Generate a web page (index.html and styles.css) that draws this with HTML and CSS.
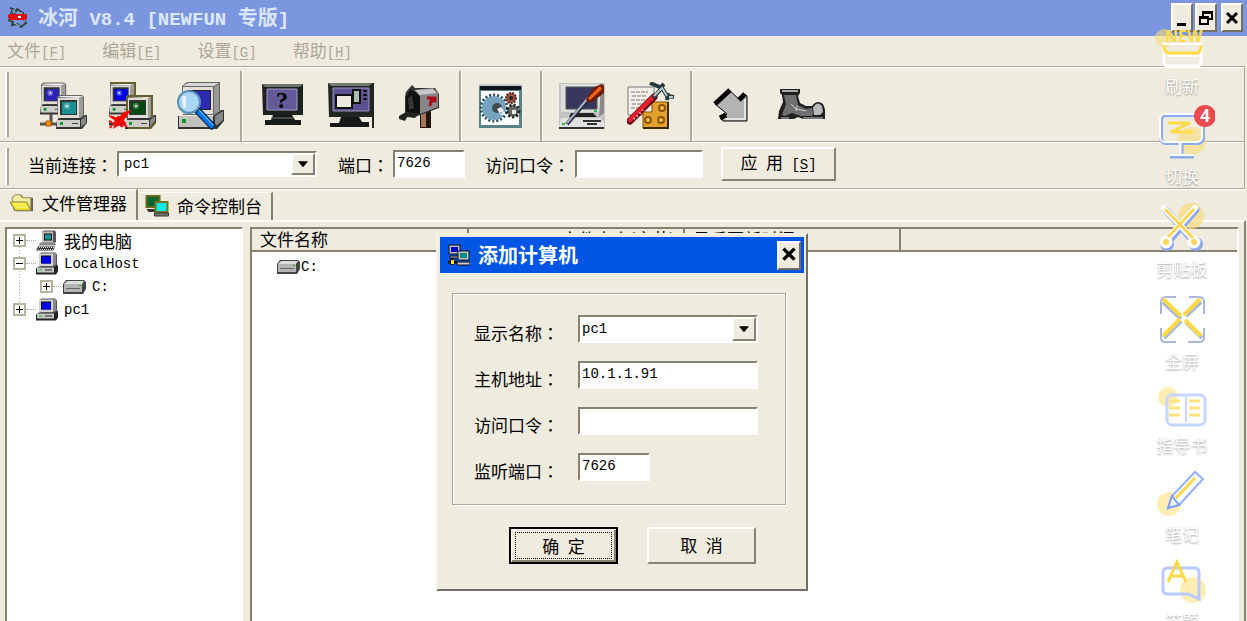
FILE: index.html
```html
<!DOCTYPE html>
<html lang="zh-CN">
<head>
    <meta charset="UTF-8">
    <meta name="viewport" content="width=device-width, initial-scale=1.0">
    <title>冰河 V8.4 [NEWFUN 专版]</title>
    <link rel="stylesheet" href="styles.css">
</head>
<body>
    <svg class="defs" aria-hidden="true">
        <symbol id="pc" viewBox="0 0 22 22">
            <path d="M3 2l2-2h14l2 2v12l-2 2H5z" fill="#555"/>
            <path d="M3 1h14v13H3z" fill="#d4d4d4"/>
            <path d="M17 1l3-1v12l-3 2z" fill="#888"/>
            <path d="M5 3h10v8H5z" fill="#000"/>
            <path d="M6 4h9v7H6z" fill="#0000e8"/>
            <path d="M0 16l3-2h17l2-2v7l-2 3H0z" fill="#222"/>
            <path d="M1 15h17v5H1z" fill="#c8c8c8"/>
            <path d="M3 17h3v1H3z" fill="#0c0"/>
            <path d="M9 17h7v1H9z" fill="#222"/>
        </symbol>
        <symbol id="drive" viewBox="0 0 23 14">
            <path d="M0 4l3-4h18l2 2v7l-3 5H0z" fill="#444"/>
            <path d="M1 4l3-3h17l-2 3z" fill="#ddd"/>
            <path d="M1 4h18v8H1z" fill="#b4b4b4"/>
            <path d="M3 8h14v1H3z" fill="#666"/>
            <path d="M16 5h2v1h-2z" fill="#0c0"/>
        </symbol>
        <!-- tower PC with monitor, the toolbar icons combine two of these -->
        <symbol id="node" viewBox="0 0 32 34">
            <path d="M2 2l3-2h22l2 2v20l-4 3H3z" fill="#666"/>
            <path d="M3 2l3-1h22l-4 2z" fill="#f2f2f2"/>
            <path d="M3 3h21v20H3z" fill="#dedbd4"/>
            <path d="M24 3l4-2v20l-4 3z" fill="#9b9b98"/>
            <path d="M5 5h17v15H5z" fill="#333"/>
            <path d="M7 7h14v12H7z" fill="currentColor"/>
            <circle cx="12" cy="11" r="3" fill="#fff" opacity=".3"/>
            <circle cx="12" cy="11" r="1" fill="#fff"/>
            <path d="M2 25l4-2h20l4-3h2v8l-5 6H1z" fill="#333"/>
            <path d="M2 25h23v7H2z" fill="#d0cec8"/>
            <path d="M26 25l5-4v7l-5 4z" fill="#888"/>
            <path d="M5 27h3v3H5z" fill="#093"/>
            <path d="M17 28h6v1h-6z" fill="#444"/>
        </symbol>
    </svg>

    <header class="titlebar">
        <svg class="app-icon" viewBox="0 0 22 22">
            <path d="M3 1l3 1-2 5 3 1 3-6 6 4-1 3 4 7-5 4-3-3-6 1 1-3-5-2" fill="none" stroke="#344" stroke-width="2"/>
            <path d="M5 3l4 3M14 5l4 10M7 16l6 3" stroke="#9bb" stroke-width="1"/>
            <path d="M1 8l2-1h17v5l-2 1H3l-2-2z" fill="#e01010"/>
            <path d="M11 9h3v2h-3z" fill="#fff"/>
        </svg>
        <h1>冰河<span class="en"> V8.4 [NEWFUN </span>专版<span class="en">]</span></h1>
        <div class="window-buttons">
            <button aria-label="最小化"><svg viewBox="0 0 18 22"><path d="M4 16h9v3H4z"/></svg></button>
            <button aria-label="还原"><svg viewBox="0 0 18 22"><path d="M6 9V5h9v7h-3M6 6h9M3 10h8v7H3zM3 11h8" fill="none" stroke="#000" stroke-width="2"/></svg></button>
            <button class="close" aria-label="关闭"><svg viewBox="0 0 18 22"><path d="M4 6l10 10M14 6L4 16" stroke="#000" stroke-width="3"/></svg></button>
        </div>
    </header>

    <nav class="menu">
        <button disabled>文件<span class="en">[<u>F</u>]</span></button>
        <button disabled>编辑<span class="en">[<u>E</u>]</span></button>
        <button disabled>设置<span class="en">[<u>G</u>]</span></button>
        <button disabled>帮助<span class="en">[<u>H</u>]</span></button>
    </nav>

    <div class="bars">
        <div class="toolbar">
            <span class="grip"></span>
            <div class="group">
                <button aria-label="添加主机">
                    <svg viewBox="0 0 48 48">
                        <svg x="0" y="0" width="30" height="33" color="#2a22b8"><use href="#node"/></svg>
                        <path d="M12 32v9M1 42h18" stroke="#555" stroke-width="3"/>
                        <path d="M7 39h5v5H7z" fill="#f90" stroke="#a50"/>
                        <svg x="16" y="13" width="32" height="34" color="#189090"><use href="#node"/></svg>
                    </svg>
                </button>
                <button aria-label="删除主机">
                    <svg viewBox="0 0 48 48">
                        <svg x="0" y="0" width="30" height="33" color="#0000ee"><use href="#node"/></svg>
                        <path d="M2 1h25v22" fill="none" stroke="#66602a" stroke-width="2"/>
                        <path d="M1 42h18" stroke="#333" stroke-width="3"/>
                        <svg x="16" y="13" width="32" height="34" color="#044a10"><use href="#node"/></svg>
                        <path d="M19 14h25v22M19 14v22M20 46h22l5-6" fill="none" stroke="#66602a" stroke-width="2"/>
                        <path d="M0 33l5 1 5 2 6-6 7-2-7 10 4 8-7-4-8 5 3-8-5-3z" fill="#f00"/>
                        <path d="M1 39l15 6M2 46l9-12" stroke="#f00" stroke-width="2" stroke-dasharray="3 1"/>
                    </svg>
                </button>
                <button aria-label="自动搜索">
                    <svg viewBox="0 0 48 48">
                        <path d="M5 4l5-4h33v28l-6 5H6z" fill="#666"/>
                        <path d="M6 4l5-3h31l-5 3z" fill="#d8d8d8"/>
                        <path d="M6 5h30v27H6z" fill="#e2dfd8"/>
                        <path d="M37 5l5-3v26l-5 4z" fill="#999"/>
                        <path d="M11 8h23v20H11z" fill="#222"/>
                        <path d="M12 9h21v18H12z" fill="#2b2ab0"/>
                        <path d="M1 34h35l8-6h3v11l-7 8H1z" fill="#333"/>
                        <path d="M2 34h34v11H2z" fill="#c4c2bc"/>
                        <path d="M38 34l8-5v9l-8 7z" fill="#888"/>
                        <path d="M5 37h4v4H5z" fill="#093"/>
                        <path d="M20 28l17 18" stroke="#024" stroke-width="7"/>
                        <path d="M21 29l15 16" stroke="#07e" stroke-width="5"/>
                        <path d="M22 28l14 15" stroke="#9cf" stroke-width="1"/>
                        <circle cx="12" cy="20" r="11" fill="#a9d6f4" stroke="#5a8fb4" stroke-width="2"/>
                        <path d="M5 14h4v12H6z" fill="#eef"/>
                    </svg>
                </button>
            </div>
            <div class="group">
                <button aria-label="查看屏幕">
                    <svg viewBox="0 0 48 48">
                        <path d="M4 2h41v31H5z" fill="#1c221f"/>
                        <path d="M4 2h41l-3 3H7z" fill="#6b756c"/>
                        <path d="M9 7h30v21H9z" fill="#655a98" stroke="#a59dc7"/>
                        <path d="M15 33h19l3 5h6v5H7v-5h6z" fill="#171918"/>
                        <path d="M13 36h22" stroke="#777"/>
                        <text x="18" y="26" class="question">?</text>
                    </svg>
                </button>
                <button aria-label="控制屏幕">
                    <svg viewBox="0 0 48 48">
                        <path d="M1 1h46v45h-2V35H2z" fill="#202622"/>
                        <path d="M1 1h44l-3 3H4z" fill="#727b70"/>
                        <path d="M6 6h36v23H6z" fill="#5d5291" stroke="#9a92ba"/>
                        <path d="M26 8h7v13h-7z" fill="#a6c0ad" stroke="#111" stroke-width="2"/>
                        <path d="M9 13h16v13H9z" fill="#efebde" stroke="#111" stroke-width="2"/>
                        <path d="M38 8v10" stroke="#000" stroke-width="3" stroke-dasharray="2 2"/>
                        <path d="M14 35h18l3 5h7v5H3v-4h9z" fill="#171918"/>
                    </svg>
                </button>
                <button aria-label="信使">
                    <svg viewBox="0 0 48 48">
                        <path d="M24 29h11v17H24z" fill="#20150f"/>
                        <path d="M25 31h5v14h-5z" fill="#a5765a"/>
                        <path d="M10 10l6-7 3 3 20 0 4 6v14L19 35l-10-4V15z" fill="#333"/>
                        <path d="M18 8l19-2 5 5v14l-18 7V14z" fill="#89868b"/>
                        <path d="M19 8l18-1 4 4-17 2z" fill="#c9c6c9"/>
                        <path d="M10 15l4-7 6 2 4 5v17l-14-2z" fill="#111"/>
                        <path d="M12 16l4-3 2 13-5 2z" fill="#343834"/>
                        <path d="M31 16h8v3h-4l-1 5" fill="none" stroke="#a90e16" stroke-width="3"/>
                        <path d="M3 34l7-4 12 2-3 4-8-1-2 4-6-2z" fill="#222"/>
                    </svg>
                </button>
            </div>
            <div class="group">
                <button aria-label="服务器配置">
                    <svg viewBox="0 0 48 48">
                        <path d="M2 2h43v44H2z" fill="#5b8188"/>
                        <path d="M2 2h43v2H2z" fill="#ccc"/>
                        <path d="M3 4h41v4H3z" fill="#101418"/>
                        <path d="M4 9h38v34H4z" fill="#fff"/>
                        <circle cx="17" cy="26" r="13" fill="none" stroke="#294b62" stroke-width="3" stroke-dasharray="2 2"/>
                        <circle cx="17" cy="26" r="12" fill="#75a3bf"/>
                        <circle cx="20" cy="26" r="5" fill="#404a50"/>
                        <circle cx="34" cy="16" r="5" fill="#9a5140" stroke="#5d2d28" stroke-width="2" stroke-dasharray="2 1"/>
                        <circle cx="36" cy="29" r="6" fill="#666" stroke="#222" stroke-width="3" stroke-dasharray="2 2"/>
                        <circle cx="34" cy="16" r="2" fill="#222"/>
                        <path d="M20 27l4-2 3 4-4 3zM23 33h5v-3h-5zM35 28h4v4h-4z" fill="#eee"/>
                    </svg>
                </button>
            </div>
            <div class="group">
                <button aria-label="系统设置">
                    <svg viewBox="0 0 48 48">
                        <path d="M1 1h46v46H1z" fill="#c4c4c6"/>
                        <path d="M3 2h40v28H3z" fill="#dededb"/>
                        <path d="M43 2h3v29l-5 4z" fill="#8b8b8b"/>
                        <path d="M8 5h31v22H8z" fill="#38375d" stroke="#555"/>
                        <path d="M13 31h22l4 4H11z" fill="#222"/>
                        <path d="M3 36h39l4 4v6H1z" fill="#e1e1df"/>
                        <path d="M1 46h45M25 39h18M29 42h10" stroke="#333" stroke-width="2"/>
                        <path d="M4 42h3M36 29h3" stroke="#2b4" stroke-width="2"/>
                        <path d="M9 42l22-26" stroke="#252b3b" stroke-width="4"/>
                        <path d="M9 41l21-25" stroke="#a7afc0" stroke-width="2"/>
                        <path d="M28 18l7-12 8-4 3 2v7L33 21z" fill="#721b0a"/>
                        <path d="M30 16L42 4l2 3-12 11z" fill="#f1661c"/>
                    </svg>
                </button>
                <button aria-label="安装工具">
                    <svg viewBox="0 0 48 48">
                        <path d="M1 5h26v28H1z" fill="#f2f0e9" stroke="#777"/>
                        <path d="M4 10h17M5 14h15M4 18h19M5 22h13M4 26h10" stroke="#777" stroke-width="1" stroke-dasharray="4 1"/>
                        <path d="M16 30h9V20h16v26H16z" fill="#e2a22c" stroke="#83500b"/>
                        <path d="M41 20v26H16" fill="none" stroke="#3d2808" stroke-width="2"/>
                        <g fill="#f7c34a" stroke="#8c530c" stroke-width="2"><circle cx="35" cy="26" r="3"/><circle cx="21" cy="38" r="3"/><circle cx="34" cy="38" r="3"/></g>
                        <path d="M3 39l24-24" stroke="#6a0711" stroke-width="7" stroke-linecap="round"/>
                        <path d="M3 38l23-23" stroke="#ec202d" stroke-width="4" stroke-linecap="round"/>
                        <path d="M7 37l9-9" stroke="#fff" stroke-width="2" stroke-dasharray="1 3"/>
                        <path d="M26 16l8-9M23 1l12 5 5 8 7 1M34 5l3-3M40 18l1-7" fill="none" stroke="#26383d" stroke-width="4"/>
                        <path d="M27 14l8-8 5 8M42 15h4" fill="none" stroke="#b8c9cc" stroke-width="2"/>
                    </svg>
                </button>
            </div>
            <div class="group">
                <button aria-label="卸载">
                    <svg viewBox="0 0 48 48">
                        <path d="M7 22L21 8l11 10 5-6 2 2v25H15l-2-4 6-3z" fill="#b3b3b3" stroke="#000" stroke-width="1"/>
                        <path d="M7 22L22 8M31 18l6-6M12 36l6-3" stroke="#000" stroke-width="5"/>
                        <path d="M37 17v20H17" fill="none" stroke="#e4e4e4" stroke-width="2"/>
                    </svg>
                </button>
                <button aria-label="清除">
                    <svg viewBox="0 0 48 48">
                        <path d="M3 7h20v4l-2 3 2 7 6 3h6q5-7 11-2 3 6 2 12v3H26l-5-2-4 2H1l1-8 4-9-1-7-2-2z" fill="#202020"/>
                        <path d="M7 13h12l2 10 8 4 6-1 1 6-1 2H24l-9-3-7 3-3-1 4-11z" fill="#707070"/>
                        <path d="M5 9h16" stroke="#aaa" stroke-width="2"/>
                        <path d="M36 26q4-8 9-2l1 6-3 3h-6z" fill="#b9b9b9"/>
                        <path d="M14 22l5 5 10 2M20 24l-1 5M4 36h8M26 36h20" fill="none" stroke="#ccc" stroke-width="1"/>
                    </svg>
                </button>
            </div>
        </div>

        <form class="connection">
            <span class="grip"></span>
            <label for="current">当前连接<span class="colon" lang="zh-TW">：</span></label>
            <span class="combo current">
                <select id="current"><option>pc1</option></select>
                <span class="arrow"><svg viewBox="0 0 9 5"><path d="M0 0h9L5 5H4z"/></svg></span>
            </span>
            <label for="port">端口<span class="colon" lang="zh-TW">：</span></label>
            <input class="port" id="port" type="text" value="7626">
            <label for="password">访问口令<span class="colon" lang="zh-TW">：</span></label>
            <input class="password" id="password" type="password">
            <button class="apply" type="button">应&ensp;用&ensp;<span class="en">[<u>S</u>]</span></button>
        </form>
    </div>

    <div class="tabs" role="tablist">
        <button class="tab active" role="tab" aria-selected="true">
            <svg viewBox="0 0 24 20">
                <path d="M3 5l3-3h5l2 3h9v13H6z" fill="#555"/>
                <path d="M2 5l3-3h5l2 3h8v12H4z" fill="#f2eda0" stroke="#99905a"/>
                <path d="M0 9h16l4 8H5z" fill="#f3e92f" stroke="#8a8340"/>
                <path d="M4 11h11M6 14h11" stroke="#fff" stroke-dasharray="1 1"/>
            </svg>
            文件管理器
        </button>
        <button class="tab" role="tab" aria-selected="false">
            <svg viewBox="0 0 24 22">
                <path d="M1 1h13v11H1z" fill="#063" stroke="#6c681b" stroke-width="2"/>
                <path d="M1 14h13v3H3z" fill="#333"/>
                <path d="M10 7h12v10H10z" fill="#0ee" stroke="#75721b" stroke-width="2"/>
                <path d="M9 18h14v3H9z" fill="#777" stroke="#333"/>
            </svg>
            命令控制台
        </button>
    </div>

    <main class="page">
        <ul class="tree">
            <li>
                <div class="row">
                    <button class="toggle" aria-label="展开"><svg viewBox="0 0 9 9"><path d="M1 4h7v1H1zM4 1h1v7H4z"/></svg></button><span class="dots"></span>
                    <svg class="node-icon" viewBox="0 0 22 22">
                        <path d="M6 2l2-1h11l1 2v10H6z" fill="#555"/>
                        <path d="M6 2h11v11H6z" fill="#bbb"/>
                        <path d="M8 4h8v7H8z" fill="#111"/>
                        <path d="M9 5h6v5H9z" fill="#199"/>
                        <path d="M4 13h15l1 3H3z" fill="#888"/>
                        <path d="M2 17h17l-2 4H0z" fill="#333"/>
                        <path d="M3 18h15M2 20h15" stroke="#ddd" stroke-dasharray="1 1"/>
                    </svg>
                    <span>我的电脑</span>
                </div>
            </li>
            <li>
                <div class="row">
                    <button class="toggle" aria-label="折叠"><svg viewBox="0 0 9 9"><path d="M1 4h7v1H1z"/></svg></button><span class="dots"></span>
                    <svg class="node-icon"><use href="#pc"/></svg>
                    <span class="en">LocalHost</span>
                </div>
                <ul>
                    <li>
                        <div class="row">
                            <button class="toggle" aria-label="展开"><svg viewBox="0 0 9 9"><path d="M1 4h7v1H1zM4 1h1v7H4z"/></svg></button><span class="dots"></span>
                            <svg class="drive-icon"><use href="#drive"/></svg>
                            <span class="en">C:</span>
                        </div>
                    </li>
                </ul>
            </li>
            <li>
                <div class="row">
                    <button class="toggle" aria-label="展开"><svg viewBox="0 0 9 9"><path d="M1 4h7v1H1zM4 1h1v7H4z"/></svg></button><span class="dots"></span>
                    <svg class="node-icon"><use href="#pc"/></svg>
                    <span class="en">pc1</span>
                </div>
            </li>
        </ul>

        <div class="files">
            <table>
                <thead>
                    <tr><th>文件名称</th><th class="size">文件大小(字节)</th><th>最后更新时间</th><th class="rest"></th></tr>
                </thead>
                <tbody>
                    <tr><td><span class="file"><svg class="drive-icon"><use href="#drive"/></svg><span class="en">C:</span></span></td><td></td><td></td><td></td></tr>
                </tbody>
            </table>
        </div>
    </main>

    <section class="dialog" role="dialog" aria-labelledby="dialog-title">
        <header>
            <svg viewBox="0 0 22 22">
                <path d="M1 1h11v9H1zM2 12h10v2H2z" fill="#bbb" stroke="#111"/>
                <path d="M3 3h7v5H3z" fill="#00c"/>
                <path d="M4 14v7M0 18h9" stroke="#111" stroke-width="3"/>
                <path d="M3 16h3v4H3z" fill="#fe0"/>
                <path d="M10 7h11v9H10zM9 18h13v3H9z" fill="#c8c8c8" stroke="#111"/>
                <path d="M12 9h7v5h-7z" fill="#088"/>
            </svg>
            <h2 id="dialog-title">添加计算机</h2>
            <button aria-label="关闭"><svg viewBox="0 0 18 22"><path d="M4 5l10 10M14 5L4 15" stroke="#000" stroke-width="3"/></svg></button>
        </header>
        <form>
            <fieldset>
                <label for="name">显示名称<span class="colon" lang="zh-TW">：</span></label>
                <span class="combo">
                    <select id="name"><option>pc1</option></select>
                    <span class="arrow"><svg viewBox="0 0 9 5"><path d="M0 0h9L5 5H4z"/></svg></span>
                </span>
                <label for="host">主机地址<span class="colon" lang="zh-TW">：</span></label>
                <input id="host" type="text" value="10.1.1.91">
                <label for="key">访问口令<span class="colon" lang="zh-TW">：</span></label>
                <input id="key" type="password">
                <label for="listen">监听端口<span class="colon" lang="zh-TW">：</span></label>
                <input class="port" id="listen" type="text" value="7626">
            </fieldset>
            <div class="actions">
                <button class="default" type="button"><span>确&ensp;定</span></button>
                <button type="button">取&ensp;消</button>
            </div>
        </form>
    </section>

    <aside class="side">
        <button>
            <svg width="54" height="42" viewBox="0 0 54 42">
                <circle cx="9" cy="11" r="9" fill="#f6dc7c" opacity=".6"/>
                <path d="M9 15v20q0 4 4 4h29q4 0 4-4V15" fill="none" stroke="#fff" stroke-width="3"/>
                <path d="M9 18q0 8 5 8h27q5 0 5-8" fill="none" stroke="#ffdb45" stroke-width="3"/>
                <path d="M9 17h37M12 29h31" stroke="#fff" stroke-width="2"/>
                <text x="10" y="15" class="new">NEW</text>
            </svg>
            刷新
        </button>
        <button>
            <svg width="54" height="48" viewBox="0 0 54 48">
                <circle cx="37" cy="30" r="14" fill="#f6dc7c" opacity=".6"/>
                <rect x="6" y="4" width="42" height="28" rx="5" fill="none" stroke="#8eaaf0" stroke-width="4"/>
                <rect x="5" y="3" width="42" height="28" rx="5" fill="none" stroke="#fff" stroke-width="2"/>
                <path d="M26 32v12" stroke="#8eaaf0" stroke-width="5"/>
                <path d="M25 32v12" stroke="#fff" stroke-width="3"/>
                <path d="M15 46h24" stroke="#8eaaf0" stroke-width="3"/>
                <path d="M15 44h24" stroke="#fff" stroke-width="2"/>
                <path d="M13 12h22L16 21h22" fill="none" stroke="#ffdb45" stroke-width="3"/>
            </svg>
            <span class="badge">4</span>
            切换
        </button>
        <button>
            <svg width="54" height="51" viewBox="0 0 54 51">
                <circle cx="36" cy="15" r="13" fill="#f6dc7c" opacity=".7"/>
                <g fill="none" stroke="#8ea6f0" stroke-width="7" stroke-linecap="round"><path d="M11 9l27 31M41 9L14 40"/><circle cx="12" cy="43" r="5" stroke-width="4"/><circle cx="41" cy="43" r="5" stroke-width="4"/></g>
                <g fill="#fff" stroke="#fff" stroke-width="6" stroke-linecap="round"><path d="M9 7l28 30M40 7L13 37"/><circle cx="11" cy="41" r="5" stroke-width="3"/><circle cx="39" cy="41" r="5" stroke-width="3"/></g>
                <path d="M10 8l28 29M39 8L13 36" stroke="#fbd657" stroke-width="3"/>
                <circle cx="11" cy="41" r="3" fill="#fbd657"/><circle cx="39" cy="41" r="3" fill="#fbd657"/>
            </svg>
            剪贴板
        </button>
        <button>
            <svg width="54" height="50" viewBox="0 0 54 50">
                <path d="M6 20V8q0-5 5-5h10M34 3h10q5 0 5 5v12M49 34v9q0 5-5 5H33M21 48H10q-4 0-4-5v-9" fill="none" stroke="#a9b7dc" stroke-width="2"/>
                <path d="M8 8l18 17M46 8L31 22M9 44l17-17M31 28l16 16" stroke="#a9b7dc" stroke-width="4"/>
                <path d="M8 5l18 17M45 5L29 21M8 42l17-17M30 26l16 16" stroke="#ffda48" stroke-width="4"/>
            </svg>
            全屏
        </button>
        <button>
            <svg width="54" height="42" viewBox="0 0 54 42">
                <circle cx="13" cy="11" r="10" fill="#ffedb3"/>
                <rect x="12" y="9" width="38" height="30" rx="5" fill="none" stroke="#c7d6ff" stroke-width="3"/>
                <path d="M31 10v26" stroke="#c7d6ff" stroke-width="2"/>
                <path d="M14 15h11M14 22h11M14 29h11M34 15h11M34 22h11M34 29h11" stroke="#ffe37e" stroke-width="3"/>
            </svg>
            指导书
        </button>
        <button>
            <svg width="54" height="47" viewBox="0 0 54 47">
                <circle cx="14" cy="34" r="12" fill="#ffedb3"/>
                <path d="M13 38l4-12L40 2l8 7-24 26z" fill="#fff" stroke="#94b1ff" stroke-width="2"/>
                <path d="M13 38l4-12 7 9z" fill="#f6f2e7" stroke="#7d9ff4" stroke-width="2"/>
                <path d="M21 28L40 8" stroke="#ffda48" stroke-width="3"/>
            </svg>
            笔记
        </button>
        <button>
            <svg width="54" height="45" viewBox="0 0 54 45">
                <circle cx="38" cy="31" r="13" fill="#ffedb3"/>
                <path d="M12 9q-4 0-4 5v17q0 4 5 4h20l11 5V13q0-4-5-4z" fill="none" stroke="#bacaff" stroke-width="3"/>
                <path d="M13 23L22 3l9 20M16 17h12" fill="none" stroke="#ffda48" stroke-width="3"/>
            </svg>
            答题
        </button>
    </aside>
</body>
</html>
```
FILE: styles.css
```css
* {
    box-sizing: border-box;
}

body {
    display: flex;
    flex-direction: column;
    height: 100vh;
    margin: 0;
    overflow: hidden;
    position: relative;
    background-color: #efebde;
    color: #000;
    font-family: "Noto Sans CJK SC", sans-serif;
    font-size: 17px;
    line-height: 22px;
}

button, input, select {
    margin: 0;
    padding: 0;
    border: none;
    border-radius: 0;
    background: none;
    color: inherit;
    font-family: inherit;
    font-size: inherit;
    line-height: inherit;
}

svg {
    display: block;
    flex: none;
}

ul {
    margin: 0;
    padding: 0;
    list-style: none;
}

u {
    text-underline-offset: 2px;
}

.defs {
    display: none;
}

.en {
    font-family: "Liberation Mono", monospace;
    font-size: 14px;
    white-space: pre;
}

.colon {
    font-family: "Noto Sans CJK TC", sans-serif;
}

/* Title bar */
.titlebar {
    display: flex;
    align-items: center;
    height: 36px;
    padding: 0 4px 0 7px;
    background-color: #7b96de;
}

.app-icon {
    width: 22px;
    height: 22px;
}

h1 {
    flex: 1;
    margin: 0 0 0 9px;
    color: #dce6ff;
    font-size: 20px;
    line-height: 24px;
}

h1 .en {
    font-size: 19px;
}

.window-buttons {
    display: flex;
    gap: 2px;
    align-self: flex-start;
    padding-top: 3px;
}

.window-buttons button, .dialog header button {
    width: 22px;
    height: 29px;
    border: 2px solid;
    border-color: #fff #716f64 #716f64 #fff;
    background-color: #efebde;
}

.window-buttons .close {
    margin-left: 2px;
}

/* Menu */
.menu {
    display: flex;
    gap: 36px;
    height: 30px;
    padding: 3px 7px;
    color: #aca899;
}

/* Toolbars */
.bars {
    margin: 0 2px 0 0;
    border: 1px solid #aca899;
    border-left: none;
    box-shadow: inset 0 1px #fff, 0 1px #fff;
}

.toolbar {
    display: flex;
    height: 75px;
    padding-left: 5px;
    border-bottom: 1px solid #aca899;
}

.grip {
    width: 4px;
    margin: 5px 0 4px;
    border-left: 2px solid #fff;
    border-right: 2px solid #aca899;
}

.group {
    display: flex;
    margin-top: 4px;
    padding: 0 5px;
    border-right: 2px solid #aca899;
    box-shadow: 1px 0 #fff;
}

.grip + .group {
    padding-left: 19px;
}

.group:last-child {
    border-right: none;
    box-shadow: none;
}

.group button {
    width: 69px;
    padding: 0 10px 0 11px;
}

.group button > svg {
    width: 48px;
    height: 48px;
}

.question {
    font-family: "Liberation Serif", serif;
    font-size: 24px;
    font-weight: bold;
}

.connection {
    display: flex;
    align-items: center;
    height: 46px;
    padding: 0 0 3px 5px;
    border-top: 1px solid #fff;
}

.connection .grip {
    align-self: stretch;
    margin: 5px 19px 0 0;
}

.connection label {
    padding-top: 2px;
}

input, .combo {
    height: 28px;
    border: 2px solid;
    border-color: #85826f #fff #fff #85826f;
    background-color: #fff;
}

input, select {
    font-family: "Liberation Mono", monospace;
    font-size: 14px;
    outline: none;
}

input {
    padding: 0 2px 3px;
}

.combo {
    display: flex;
}

select {
    flex: 1;
    min-width: 0;
    padding-left: 2px;
    appearance: none;
}

.arrow {
    display: flex;
    align-items: center;
    justify-content: center;
    width: 24px;
    border: 2px solid;
    border-color: #fff #85826f #85826f #fff;
    background-color: #efebde;
}

.arrow svg {
    width: 10px;
    height: 6px;
}

.current {
    width: 200px;
    height: 26px;
    margin: 0 21px 0 4px;
}

.current select {
    padding-left: 5px;
}

.port {
    width: 72px;
}

.connection .port {
    margin: 0 20px 0 4px;
}

.password {
    width: 128px;
    margin: 0 18px 0 5px;
}

.apply, .actions button {
    border: 2px solid;
    border-color: #fff #85826f #85826f #fff;
    background-color: #efebde;
}

.apply {
    width: 115px;
    height: 34px;
    padding-bottom: 2px;
}

/* Tabs */
.tabs {
    display: flex;
    align-items: flex-end;
    height: 31px;
    padding-left: 2px;
}

.tab {
    display: flex;
    align-items: center;
    gap: 7px;
    height: 28px;
    padding: 0 9px 2px 6px;
    border-top: 1px solid #fff;
    border-right: 2px solid #85826f;
}

.tab svg {
    width: 25px;
    height: 22px;
}

.tab.active {
    height: 31px;
    padding: 0 9px 4px 8px;
    margin-right: 1px;
}

/* Main page */
.page {
    display: flex;
    flex: 1;
    gap: 7px;
    min-height: 0;
    padding: 5px 5px 0;
    margin-right: 1px;
    border-top: 2px solid #fff;
    border-right: 2px solid #85826f;
}

.tree, .files {
    border: 2px solid #85826f;
    border-right-color: #fff;
    border-bottom: none;
    background-color: #fff;
}

/* the dotted line joins the toggles of the first level */
.tree {
    width: 238px;
    padding-left: 6px;
    background-image: repeating-linear-gradient(#aca899 0 1px, transparent 1px 3px);
    background-repeat: no-repeat;
    background-size: 1px 70px;
    background-position: 12px 12px;
}

.tree ul {
    padding-left: 27px;
}

.row {
    display: flex;
    align-items: center;
    height: 23px;
    line-height: 20px;
}

.toggle {
    width: 13px;
    height: 13px;
    border: 2px solid #b5b2a0;
    background-color: #fff;
}

.dots {
    width: 10px;
    border-top: 1px dotted #aca899;
}

.node-icon {
    width: 22px;
    height: 23px;
    margin-right: 6px;
}

.drive-icon {
    width: 23px;
    height: 14px;
    margin-right: 6px;
}

.files {
    flex: 1;
}

table {
    width: 100%;
    border-collapse: collapse;
    table-layout: fixed;
}

th {
    width: 216px;
    height: 22px;
    padding: 0 8px 1px;
    border-right: 2px solid #85826f;
    border-bottom: 2px solid #85826f;
    background-color: #efebde;
    font-weight: normal;
    line-height: 18px;
    text-align: left;
}

th.size {
    text-align: right;
}

th.rest {
    width: auto;
    border-right: none;
}

td {
    padding: 4px 0 0 25px;
}

.file {
    display: flex;
    align-items: center;
}

.file .drive-icon {
    margin-right: 1px;
}

/* Add computer dialog */
.dialog {
    position: absolute;
    top: 233px;
    left: 436px;
    width: 372px;
    padding: 2px;
    border: 2px solid;
    border-color: #f6f3ea #716f64 #716f64 #f6f3ea;
    background-color: #efebde;
}

.dialog header {
    display: flex;
    align-items: center;
    gap: 8px;
    height: 36px;
    padding: 0 3px 0 8px;
    background-color: #0055e5;
    color: #fff;
}

.dialog header > svg {
    width: 22px;
    height: 22px;
}

h2 {
    flex: 1;
    margin: 0;
    font-size: 20px;
    line-height: 24px;
}

.dialog header button {
    width: 24px;
}

fieldset {
    display: grid;
    grid-template-columns: 104px 180px;
    row-gap: 18px;
    margin: 20px 18px 0 12px;
    padding: 21px 0 23px 21px;
    border: 1px solid #aca899;
    box-shadow: 1px 1px #fff, inset 1px 1px #fff;
}

fieldset label {
    padding-top: 7px;
    height: 28px;
}

.actions {
    display: flex;
    gap: 29px;
    padding: 22px 0 23px 69px;
}

.actions button {
    width: 109px;
    height: 37px;
    padding-bottom: 2px;
}

.actions .default {
    padding: 2px;
    border-color: #000;
    box-shadow: inset 1px 1px #fff, inset -2px -2px #85826f;
}

.default span {
    display: block;
    margin: 0 2px;
    border: 1px dotted #000;
    line-height: 25px;
}

/* Floating side tools */
.side {
    position: absolute;
    top: 27px;
    right: 32px;
    bottom: 0;
    display: flex;
    flex-direction: column;
    gap: 16px;
    width: 66px;
    overflow: hidden;
}

.side button {
    position: relative;
    display: flex;
    flex: none;
    flex-direction: column;
    align-items: center;
    gap: 8px;
    color: #fff;
    line-height: 18px;
    text-shadow: 0 1px 2px rgba(0, 0, 0, 0.4);
}

.new {
    fill: #ffdb45;
    font-family: "Open Sans", sans-serif;
    font-size: 16px;
    font-weight: bold;
    text-shadow: none;
}

.badge {
    position: absolute;
    top: -6px;
    right: -1px;
    width: 22px;
    height: 22px;
    border-radius: 50%;
    background-color: #e84a50;
    font-family: "Open Sans", sans-serif;
    font-weight: bold;
    line-height: 22px;
    text-shadow: none;
}
```
